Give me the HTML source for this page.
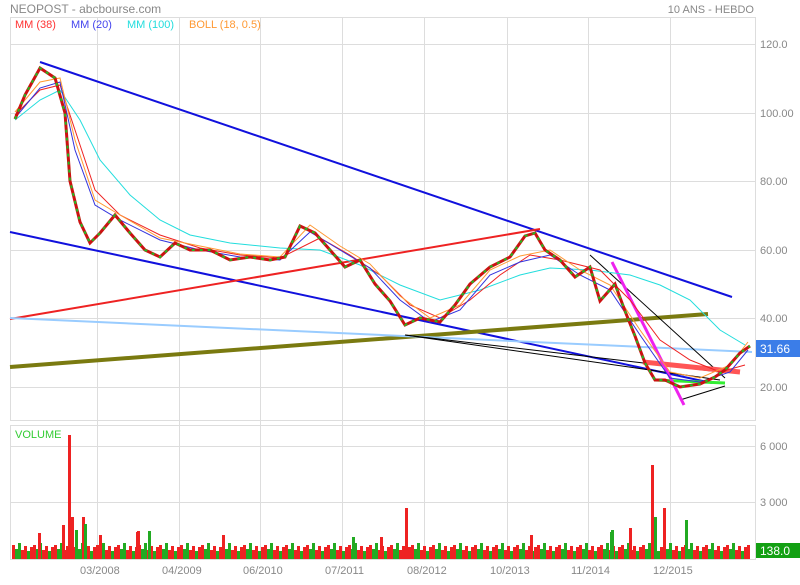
<!DOCTYPE html>
<html><head><style>
body{margin:0;width:800px;height:580px;background:#fff;overflow:hidden;font-family:"Liberation Sans",sans-serif}
svg text{font-family:"Liberation Sans",sans-serif}
</style></head><body>
<svg width="800" height="580" xmlns="http://www.w3.org/2000/svg">
<defs>
<pattern id="vb" width="21" height="22" patternUnits="userSpaceOnUse" patternTransform="translate(12,537)">
<rect x="0" y="8" width="3" height="14" fill="#e22"/><rect x="3" y="12" width="3" height="10" fill="#2a2"/>
<rect x="6" y="6" width="3" height="16" fill="#2a2"/><rect x="9" y="13" width="3" height="9" fill="#e22"/>
<rect x="12" y="9" width="3" height="13" fill="#e22"/><rect x="15" y="14" width="3" height="8" fill="#2a2"/>
<rect x="18" y="10" width="3" height="12" fill="#e22"/>
</pattern>
</defs>
<text x="10" y="13" font-size="12" fill="#888">NEOPOST - abcbourse.com</text>
<text x="754" y="13" font-size="11" fill="#888" text-anchor="end">10 ANS - HEBDO</text>
<g stroke="#ddd" stroke-width="1" fill="none">
<rect x="10.5" y="17.5" width="745" height="403"/>
<rect x="10.5" y="425.5" width="745" height="134"/>
<line x1="10" y1="44.5" x2="756" y2="44.5"/><line x1="10" y1="113.5" x2="756" y2="113.5"/>
<line x1="10" y1="181.5" x2="756" y2="181.5"/><line x1="10" y1="250.5" x2="756" y2="250.5"/>
<line x1="10" y1="318.5" x2="756" y2="318.5"/><line x1="10" y1="387.5" x2="756" y2="387.5"/>
<line x1="10" y1="446.5" x2="756" y2="446.5"/><line x1="10" y1="502.5" x2="756" y2="502.5"/>
<g><line x1="97.5" y1="17" x2="97.5" y2="560"/><line x1="179.5" y1="17" x2="179.5" y2="560"/><line x1="260.5" y1="17" x2="260.5" y2="560"/><line x1="342.5" y1="17" x2="342.5" y2="560"/><line x1="424.5" y1="17" x2="424.5" y2="560"/><line x1="507.5" y1="17" x2="507.5" y2="560"/><line x1="588.5" y1="17" x2="588.5" y2="560"/><line x1="670.5" y1="17" x2="670.5" y2="560"/></g>
</g>
<text x="15" y="28" font-size="11" fill="#f33">MM (38)</text>
<text x="71" y="28" font-size="11" fill="#44e">MM (20)</text>
<text x="127" y="28" font-size="11" fill="#2dd">MM (100)</text>
<text x="189" y="28" font-size="11" fill="#f93">BOLL (18, 0.5)</text>
<text x="15" y="438" font-size="11" fill="#3c3">VOLUME</text>
<g font-size="11" fill="#888">
<text x="760" y="48">120.0</text><text x="760" y="117">100.00</text><text x="760" y="185">80.00</text>
<text x="760" y="254">60.00</text><text x="760" y="322">40.00</text><text x="760" y="391">20.00</text>
<text x="760" y="450">6 000</text><text x="760" y="506">3 000</text>
<text x="80" y="574">03/2008</text><text x="162" y="574">04/2009</text><text x="243" y="574">06/2010</text>
<text x="325" y="574">07/2011</text><text x="407" y="574">08/2012</text><text x="490" y="574">10/2013</text>
<text x="571" y="574">11/2014</text><text x="653" y="574">12/2015</text>
</g>
<line x1="40" y1="62" x2="732" y2="297" stroke="#11d" stroke-width="2"/>
<line x1="10" y1="232" x2="712" y2="383" stroke="#11d" stroke-width="2"/>
<line x1="10" y1="319" x2="540" y2="229" stroke="#e22" stroke-width="2"/>
<line x1="10" y1="367" x2="708" y2="314" stroke="#7a7a10" stroke-width="4"/>
<line x1="10" y1="318" x2="752" y2="352" stroke="#9cf" stroke-width="2"/>
<line x1="405" y1="335" x2="720" y2="372" stroke="#000" stroke-width="1"/>
<line x1="405" y1="335" x2="720" y2="380" stroke="#000" stroke-width="1"/>
<line x1="590" y1="255" x2="725" y2="378" stroke="#000" stroke-width="1"/>
<line x1="680" y1="400" x2="725" y2="386" stroke="#000" stroke-width="1"/>
<line x1="643" y1="362" x2="740" y2="372" stroke="#f55" stroke-width="5"/>
<line x1="655" y1="380" x2="725" y2="383" stroke="#3e3" stroke-width="3"/>
<line x1="612" y1="262" x2="684" y2="405" stroke="#e2e" stroke-width="3"/>
<polyline fill="none" stroke="#2dd" stroke-width="1" points="15,120 40,100 60,90 80,120 100,160 130,195 160,220 190,235 230,243 280,248 320,250 360,265 400,285 440,300 480,290 520,275 550,268 590,270 630,275 660,285 690,300 720,330 745,345"/>
<polyline fill="none" stroke="#e22" stroke-width="1" points="15,115 40,90 60,85 75,130 95,190 120,215 160,235 200,248 240,255 280,258 320,238 350,255 380,275 410,305 440,318 470,300 500,275 530,255 560,260 600,270 630,300 660,340 690,360 720,372 745,365"/>
<polyline fill="none" stroke="#33d" stroke-width="1" points="15,118 40,88 60,82 75,150 95,205 120,220 160,240 200,250 240,257 280,260 310,232 340,250 370,268 400,300 430,322 460,310 490,275 520,262 550,255 580,275 610,290 640,335 670,378 700,382 730,372 748,350"/>
<polyline fill="none" stroke="#f93" stroke-width="1" points="15,112 40,82 60,78 75,140 95,200 120,215 160,238 200,246 240,254 280,257 310,225 340,246 370,264 400,296 430,318 460,305 490,270 520,256 550,250 580,270 610,285 640,330 670,372 700,378 730,365 748,342"/>
<polyline fill="none" stroke="#c11" stroke-width="3" points="15,119 25,95 40,68 55,78 65,113 70,181 80,222 90,243 100,233 115,215 130,233 145,250 160,257 175,243 190,250 210,250 230,260 250,257 270,260 285,257 300,226 315,233 330,250 345,267 360,260 375,284 390,301 405,325 420,318 440,322 455,305 470,284 490,267 510,257 525,236 535,233 545,250 560,260 575,277 590,267 600,301 615,284 625,311 635,336 645,363 655,380 665,380 680,387 700,384 715,377 725,370 740,353 750,346"/>
<polyline fill="none" stroke="#2b2" stroke-width="2" stroke-dasharray="3 5" points="15,119 25,95 40,68 55,78 65,113 70,181 80,222 90,243 100,233 115,215 130,233 145,250 160,257 175,243 190,250 210,250 230,260 250,257 270,260 285,257 300,226 315,233 330,250 345,267 360,260 375,284 390,301 405,325 420,318 440,322 455,305 470,284 490,267 510,257 525,236 535,233 545,250 560,260 575,277 590,267 600,301 615,284 625,311 635,336 645,363 655,380 665,380 680,387 700,384 715,377 725,370 740,353 750,346"/>
<rect x="12" y="537" width="738" height="22" fill="url(#vb)"/>
<g fill="#e22">
<rect x="68" y="435" width="3" height="124"/><rect x="71" y="517" width="3" height="42"/><rect x="82" y="517" width="3" height="42"/>
<rect x="405" y="508" width="3" height="51"/><rect x="651" y="465" width="3" height="94"/><rect x="663" y="508" width="3" height="51"/>
<rect x="38" y="533" width="3" height="26"/><rect x="99" y="535" width="3" height="24"/><rect x="137" y="531" width="3" height="28"/>
<rect x="222" y="535" width="3" height="24"/><rect x="530" y="535" width="3" height="24"/><rect x="629" y="528" width="3" height="31"/>
<rect x="62" y="525" width="3" height="34"/><rect x="136" y="532" width="3" height="27"/><rect x="380" y="537" width="3" height="22"/>
</g>
<g fill="#2a2">
<rect x="84" y="524" width="3" height="35"/><rect x="148" y="531" width="3" height="28"/><rect x="654" y="517" width="3" height="42"/>
<rect x="685" y="520" width="3" height="39"/><rect x="611" y="530" width="3" height="29"/><rect x="352" y="537" width="3" height="22"/>
<rect x="75" y="530" width="3" height="29"/><rect x="610" y="532" width="3" height="27"/>
</g>
<rect x="756" y="340" width="44" height="17" fill="#3b7de8"/>
<text x="760" y="353" font-size="12" fill="#fff">31.66</text>
<rect x="756" y="543" width="44" height="15" fill="#13a013"/>
<text x="760" y="555" font-size="12" fill="#fff">138.0</text>
</svg>
</body></html>
